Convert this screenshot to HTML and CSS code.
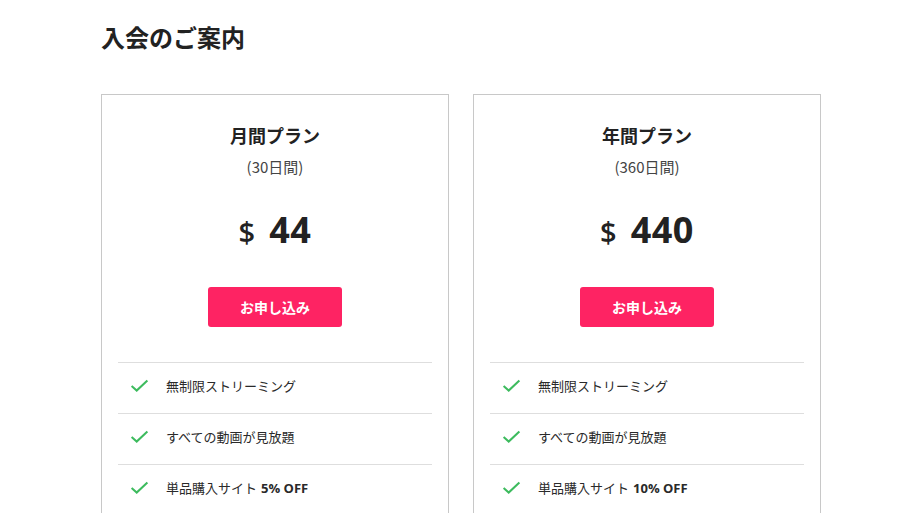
FILE: index.html
```html
<!DOCTYPE html>
<html lang="ja">
<head>
<meta charset="utf-8">
<link rel="stylesheet" href="styles.css">
</head>
<body>
<main class="page">
  <h1 class="page-title">入会のご案内</h1>
  <div class="plans">
    <section class="plan">
      <h2 class="plan-name">月間プラン</h2>
      <p class="plan-term">(30日間)</p>
      <p class="plan-price"><span class="cur">$</span><span class="amt">44</span></p>
      <a class="plan-btn" href="#">お申し込み</a>
      <ul class="features">
        <li><svg class="chk" viewBox="0 0 20 14"><path d="M1.5 7.5 L7 12.5 L18.5 1.5" fill="none" stroke="#3dbb5e" stroke-width="2.2"/></svg>無制限ストリーミング</li>
        <li><svg class="chk" viewBox="0 0 20 14"><path d="M1.5 7.5 L7 12.5 L18.5 1.5" fill="none" stroke="#3dbb5e" stroke-width="2.2"/></svg>すべての動画が見放題</li>
        <li><svg class="chk" viewBox="0 0 20 14"><path d="M1.5 7.5 L7 12.5 L18.5 1.5" fill="none" stroke="#3dbb5e" stroke-width="2.2"/></svg>単品購入サイト <b>5% OFF</b></li>
      </ul>
    </section>
    <section class="plan">
      <h2 class="plan-name">年間プラン</h2>
      <p class="plan-term">(360日間)</p>
      <p class="plan-price"><span class="cur">$</span><span class="amt">440</span></p>
      <a class="plan-btn" href="#">お申し込み</a>
      <ul class="features">
        <li><svg class="chk" viewBox="0 0 20 14"><path d="M1.5 7.5 L7 12.5 L18.5 1.5" fill="none" stroke="#3dbb5e" stroke-width="2.2"/></svg>無制限ストリーミング</li>
        <li><svg class="chk" viewBox="0 0 20 14"><path d="M1.5 7.5 L7 12.5 L18.5 1.5" fill="none" stroke="#3dbb5e" stroke-width="2.2"/></svg>すべての動画が見放題</li>
        <li><svg class="chk" viewBox="0 0 20 14"><path d="M1.5 7.5 L7 12.5 L18.5 1.5" fill="none" stroke="#3dbb5e" stroke-width="2.2"/></svg>単品購入サイト <b>10% OFF</b></li>
      </ul>
    </section>
  </div>
</main>
</body>
</html>
```

FILE: styles.css
```css
html, body {
  margin: 0;
  padding: 0;
  background: #fff;
}
body {
  font-family: "Open Sans", "Noto Sans CJK JP", sans-serif;
  color: #222;
}
.page {
  padding: 22px 0 0 101px;
  width: 720px;
}
.page-title {
  margin: 0;
  font-size: 24px;
  line-height: 32px;
  font-weight: 700;
  color: #222;
}
.plans {
  margin-top: 40px;
  display: flex;
  gap: 24px;
}
.plan {
  flex: 0 0 348px;
  box-sizing: border-box;
  border: 1px solid #c8c8c8;
  border-bottom: none;
  padding: 29px 16px 0;
  display: flex;
  flex-direction: column;
  align-items: center;
  height: 430px;
}
.plan-name {
  margin: 0;
  font-size: 18px;
  line-height: 24px;
  font-weight: 700;
  color: #222;
}
.plan-term {
  margin: 9px 0 0;
  font-size: 15px;
  line-height: 20px;
  color: #444;
  font-family: "Noto Sans CJK JP", sans-serif;
}
.plan-price {
  margin: 31px 0 0;
  line-height: 44px;
  height: 44px;
  display: flex;
  align-items: baseline;
  gap: 14px;
  color: #222;
}
.cur {
  font-size: 29px;
  font-weight: 600;
}
.amt {
  font-size: 36px;
  font-weight: 700;
  letter-spacing: 0.5px;
}
.plan-btn {
  margin-top: 35px;
  width: 134px;
  height: 40px;
  box-sizing: border-box;
  background: #fe2363;
  border-radius: 3px;
  color: #fff;
  font-size: 14px;
  font-weight: 700;
  text-decoration: none;
  display: flex;
  align-items: center;
  justify-content: center;
}
.features {
  list-style: none;
  margin: 35px 0 0;
  padding: 0;
  align-self: stretch;
}
.features li {
  border-top: 1px solid #dedede;
  height: 51px;
  box-sizing: border-box;
  padding-bottom: 5px;
  display: flex;
  align-items: center;
  padding-left: 12px;
  font-size: 13px;
  color: #2a2a2a;
}
.features b {
  font-weight: 700;
  margin-left: 4px;
}
.chk {
  width: 19px;
  height: 13px;
  margin-right: 17px;
  flex: none;
}
```
